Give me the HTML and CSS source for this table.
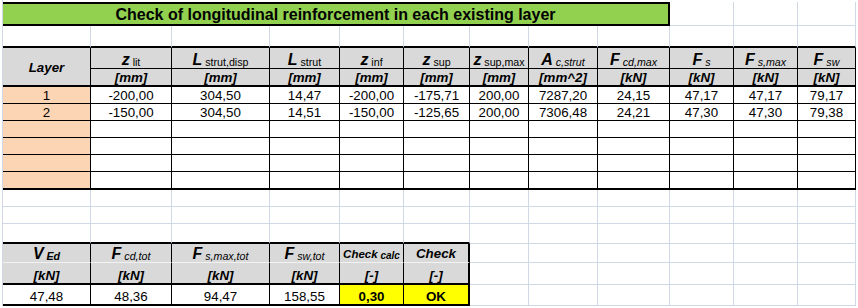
FILE: index.html
```html
<!DOCTYPE html>
<html lang="en">
<head>
<meta charset="utf-8">
<title>Check of longitudinal reinforcement</title>
<link rel="stylesheet" href="styles.css">
</head>
<body>
<div class="sheet">
  <!-- row 1 -->
  <div class="c title"><span>Check of longitudinal reinforcement in each existing layer</span></div>
  <div class="c"></div><div class="c"></div><div class="c"></div>
  <!-- row 2 -->
  <div class="c hb"></div><div class="c hb"></div><div class="c hb"></div><div class="c hb"></div>
  <div class="c hb"></div><div class="c hb"></div><div class="c hb"></div><div class="c hb"></div>
  <div class="c hb"></div><div class="c hb"></div><div class="c hb"></div><div class="c hb"></div>
  <!-- row 3 -->
  <div class="c hd layer"><span>Layer</span></div>
  <div class="c hd sym"><span>z<span class="sub"> lit</span></span></div>
  <div class="c hd sym"><span>L<span class="sub"> strut,disp</span></span></div>
  <div class="c hd sym"><span>L<span class="sub"> strut</span></span></div>
  <div class="c hd sym"><span>z<span class="sub"> inf</span></span></div>
  <div class="c hd sym"><span>z<span class="sub"> sup</span></span></div>
  <div class="c hd sym"><span>z<span class="sub"> sup,max</span></span></div>
  <div class="c hd sym"><span>A<span class="sub it"> c,strut</span></span></div>
  <div class="c hd sym"><span>F<span class="sub it"> cd,max</span></span></div>
  <div class="c hd sym"><span>F<span class="sub it"> s</span></span></div>
  <div class="c hd sym"><span>F<span class="sub it"> s,max</span></span></div>
  <div class="c hd sym"><span>F<span class="sub it"> sw</span></span></div>
  <!-- row 4 -->
  <div class="c hd unit"><span>[mm]</span></div>
  <div class="c hd unit"><span>[mm]</span></div>
  <div class="c hd unit"><span>[mm]</span></div>
  <div class="c hd unit"><span>[mm]</span></div>
  <div class="c hd unit"><span>[mm]</span></div>
  <div class="c hd unit"><span>[mm]</span></div>
  <div class="c hd unit"><span>[mm^2]</span></div>
  <div class="c hd unit"><span>[kN]</span></div>
  <div class="c hd unit"><span>[kN]</span></div>
  <div class="c hd unit"><span>[kN]</span></div>
  <div class="c hd unit"><span>[kN]</span></div>
  <!-- data rows -->
  <div class="c lay"><span>1</span></div>
  <div class="c d"><span>-200,00</span></div><div class="c d"><span>304,50</span></div><div class="c d"><span>14,47</span></div>
  <div class="c d"><span>-200,00</span></div><div class="c d"><span>-175,71</span></div><div class="c d"><span>200,00</span></div>
  <div class="c d"><span>7287,20</span></div><div class="c d"><span>24,15</span></div><div class="c d"><span>47,17</span></div>
  <div class="c d"><span>47,17</span></div><div class="c d"><span>79,17</span></div>

  <div class="c lay"><span>2</span></div>
  <div class="c d"><span>-150,00</span></div><div class="c d"><span>304,50</span></div><div class="c d"><span>14,51</span></div>
  <div class="c d"><span>-150,00</span></div><div class="c d"><span>-125,65</span></div><div class="c d"><span>200,00</span></div>
  <div class="c d"><span>7306,48</span></div><div class="c d"><span>24,21</span></div><div class="c d"><span>47,30</span></div>
  <div class="c d"><span>47,30</span></div><div class="c d"><span>79,38</span></div>

  <div class="c lay"></div>
  <div class="c d"></div><div class="c d"></div><div class="c d"></div><div class="c d"></div><div class="c d"></div><div class="c d"></div>
  <div class="c d"></div><div class="c d"></div><div class="c d"></div><div class="c d"></div><div class="c d"></div>

  <div class="c lay"></div>
  <div class="c d"></div><div class="c d"></div><div class="c d"></div><div class="c d"></div><div class="c d"></div><div class="c d"></div>
  <div class="c d"></div><div class="c d"></div><div class="c d"></div><div class="c d"></div><div class="c d"></div>

  <div class="c lay"></div>
  <div class="c d"></div><div class="c d"></div><div class="c d"></div><div class="c d"></div><div class="c d"></div><div class="c d"></div>
  <div class="c d"></div><div class="c d"></div><div class="c d"></div><div class="c d"></div><div class="c d"></div>

  <div class="c lay end"></div>
  <div class="c d end"></div><div class="c d end"></div><div class="c d end"></div><div class="c d end"></div><div class="c d end"></div><div class="c d end"></div>
  <div class="c d end"></div><div class="c d end"></div><div class="c d end"></div><div class="c d end"></div><div class="c d end"></div>

  <!-- blank rows -->
  <div class="c"></div><div class="c"></div><div class="c"></div><div class="c"></div><div class="c"></div><div class="c"></div>
  <div class="c"></div><div class="c"></div><div class="c"></div><div class="c"></div><div class="c"></div><div class="c"></div>

  <div class="c"></div><div class="c"></div><div class="c"></div><div class="c"></div><div class="c"></div><div class="c"></div>
  <div class="c"></div><div class="c"></div><div class="c"></div><div class="c"></div><div class="c"></div><div class="c"></div>

  <div class="c hb"></div><div class="c hb"></div><div class="c hb"></div><div class="c hb"></div><div class="c hb"></div><div class="c hb"></div>
  <div class="c"></div><div class="c"></div><div class="c"></div><div class="c"></div><div class="c"></div><div class="c"></div>

  <!-- lower table header -->
  <div class="c hd sym lo"><span>V<span class="sub bi"> Ed</span></span></div>
  <div class="c hd sym lo"><span>F<span class="sub it"> cd,tot</span></span></div>
  <div class="c hd sym lo"><span>F<span class="sub it"> s,max,tot</span></span></div>
  <div class="c hd sym lo"><span>F<span class="sub it"> sw,tot</span></span></div>
  <div class="c hd lo chk"><span>Check<span class="sub bi"> calc</span></span></div>
  <div class="c hd lo rt"><span>Check</span></div>
  <div class="c"></div><div class="c"></div><div class="c"></div><div class="c"></div><div class="c"></div><div class="c"></div>

  <div class="c hd unit"><span>[kN]</span></div>
  <div class="c hd unit"><span>[kN]</span></div>
  <div class="c hd unit"><span>[kN]</span></div>
  <div class="c hd unit"><span>[kN]</span></div>
  <div class="c hd unit"><span>[-]</span></div>
  <div class="c hd unit rt"><span>[-]</span></div>
  <div class="c"></div><div class="c"></div><div class="c"></div><div class="c"></div><div class="c"></div><div class="c"></div>

  <div class="c d end"><span>47,48</span></div>
  <div class="c d end"><span>48,36</span></div>
  <div class="c d end"><span>94,47</span></div>
  <div class="c d end"><span>158,55</span></div>
  <div class="c d end yl"><span>0,30</span></div>
  <div class="c d end yl rt"><span>OK</span></div>
  <div class="c"></div><div class="c"></div><div class="c"></div><div class="c"></div><div class="c"></div><div class="c"></div>
</div>
</body>
</html>
```
FILE: styles.css
```css
* { box-sizing: border-box; }
html, body { margin: 0; padding: 0; background: #fff; }
body {
  font-family: "Liberation Sans", Arial, sans-serif;
  color: #000;
}
.sheet {
  display: grid;
  grid-template-columns: 88px 81px 98px 70px 64px 66px 59px 69px 72px 64px 64px 58px;
  grid-template-rows: 24px 22px 21px 18px 17px 17px 17px 17px 17px 18px 17px 17px 20px 19px 22px 21px;
  width: max-content;
  margin-left: 2px;
  padding-top: 2px;
  border-left: 1px solid #d0d7e5;
}
.c {
  display: flex;
  align-items: flex-end;
  justify-content: center;
  border-right: 1px solid #d0d7e5;
  border-bottom: 1px solid #d0d7e5;
  font-size: 13.33px;
  line-height: 15px;
  white-space: nowrap;
}
.title {
  grid-column: span 9;
  background: #92d050;
  border-top: 2px solid #000;
  border-right: 2px solid #000;
  border-bottom: 2px solid #000;
  font-size: 16px;
  font-weight: bold;
  line-height: 18px;
}
.hb { border-bottom: 2px solid #000; }
.hd {
  background: #d9d9d9;
  border-right-color: #000;
  border-bottom-color: #000;
  font-weight: bold;
  font-style: italic;
}
.sym { font-size: 16px; line-height: 16px; }
.unit { border-bottom-width: 2px; }
.layer {
  grid-row: span 2;
  align-items: center;
  border-bottom-width: 2px;
  padding-top: 2px;
}
.lay {
  background: #fcd5b4;
  border-right-color: #000;
  border-bottom-color: #000;
}
.d {
  border-right-color: #000;
  border-bottom-color: #000;
}
.end { border-bottom-width: 2px; }
.sub {
  font-size: 10.67px;
  font-weight: normal;
  font-style: normal;
  line-height: 0;
  vertical-align: -1px;
}
.sub.it { font-style: italic; }
.sub.bi { font-style: italic; font-weight: bold; }
.lo { border-bottom-color: #f2f2f2; line-height: 16px; }
.chk { font-size: 11.5px; }
.chk .sub { font-size: 10px; }
.rt { border-right: 2px solid #000; }
.yl { background: #ffff00; font-weight: bold; }
```
